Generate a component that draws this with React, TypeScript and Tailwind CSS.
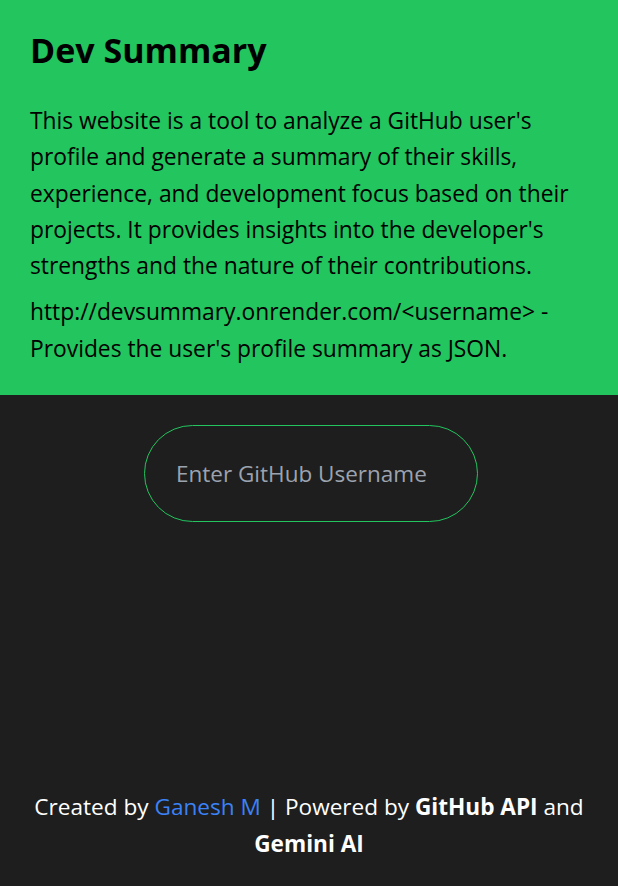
export default function App() {
  return (
    <div
      className="min-h-screen flex flex-col bg-[#1e1e1e]"
      style={{ fontFamily: '"Segoe UI", "Open Sans", "Noto Sans", sans-serif' }}
    >
      <header className="bg-[#22c55e] px-[30px] pt-[26px] pb-[28px] text-black">
        <h1 className="text-[34px] font-bold leading-[48px]">Dev Summary</h1>
        <p className="mt-[29px] text-[22.8px] leading-[36.3px]">
          This website is a tool to analyze a GitHub user's profile and generate a summary of their
          skills, experience, and development focus based on their projects. It provides insights
          into the developer's strengths and the nature of their contributions.
        </p>
        <p className="mt-[10px] text-[22.8px] leading-[36.5px]">
          http://devsummary.onrender.com/&lt;username&gt; - Provides the user's profile summary as
          JSON.
        </p>
      </header>

      <main className="flex-1 flex justify-center pt-[30px]">
        <input
          type="text"
          placeholder="Enter GitHub Username"
          className="ml-[4px] w-[334px] h-[97px] rounded-full border border-[#22c55e] bg-transparent pl-[31px] pr-[30px] text-[22.5px] text-white placeholder:text-[#9ca3af] outline-none"
        />
      </main>

      <footer className="px-4 pb-[24px] text-center text-[22.6px] leading-[37px] text-white">
        Created by <a className="text-[#3b82f6]">Ganesh M</a> | Powered by{' '}
        <strong className="font-bold">GitHub API</strong> and{' '}
        <strong className="font-bold">Gemini AI</strong>
      </footer>
    </div>
  );
}
